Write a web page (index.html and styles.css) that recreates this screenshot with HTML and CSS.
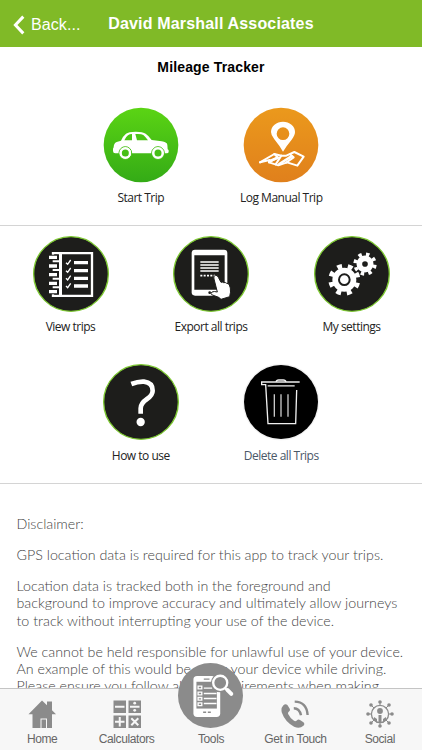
FILE: index.html
```
<!DOCTYPE html>
<html lang="en">
<head>
  <meta charset="UTF-8">
  <title>Mileage Tracker - David Marshall Associates</title>
  <meta name="viewport" content="width=device-width, initial-scale=1.0">
  <link rel="stylesheet" href="styles.css">
</head>
<body>
  <div class="app">
    <header class="header">
      <a class="back" href="#">
        <svg class="chevron" viewBox="0 0 12 20"><path d="M10.3 1.6 2.4 10l7.9 8.4"/></svg>
        <span>Back...</span>
      </a>
      <h1>David Marshall Associates</h1>
    </header>

    <main class="content">
      <h2>Mileage Tracker</h2>

      <!-- Start / log a trip -->
      <section class="row row-start">
        <a class="tile" href="#">
          <svg viewBox="36 33 234 234">
            <defs>
              <linearGradient id="green" x1="0" y1="0" x2="0" y2="1">
                <stop offset="0" stop-color="#5bd414"/>
                <stop offset="1" stop-color="#34ab16"/>
              </linearGradient>
            </defs>
            <circle cx="153" cy="150" r="112" fill="url(#green)"/>
            <path fill="#fff" d="M71 157q0-12 9-16l13-4q6-14 15-21 8-6 29-6 22 0 30 6 9 6 18 19l30 4q15 2 17 10l1 14q4 1 3 7 0 5-6 5H76q-7 0-7-7v-7z"/>
            <path fill="#4bc415" d="M103 136q6-12 11-15 5-4 12-4v19zM136 117q19-1 24 3t14 16h-33z"/>
            <g fill="#fff" stroke="#47c115" stroke-width="3">
              <circle cx="106" cy="174" r="19"/><circle cx="204" cy="174" r="19"/>
            </g>
            <g fill="#46bf15" stroke="#fff" stroke-width="7">
              <circle cx="106" cy="174" r="14"/><circle cx="204" cy="174" r="14"/>
            </g>
          </svg>
          <span>Start Trip</span>
        </a>
        <a class="tile" href="#">
          <svg viewBox="51 33 234 234">
            <defs>
              <linearGradient id="orange" x1="0" y1="0" x2="0" y2="1">
                <stop offset="0" stop-color="#eb991c"/>
                <stop offset="1" stop-color="#e0801c"/>
              </linearGradient>
            </defs>
            <circle cx="168" cy="150" r="112" fill="url(#orange)"/>
            <path fill="#fff" fill-rule="evenodd" d="M174 170q-9-16-26-37-10-12-10-22a36 31 0 0 1 72 0q0 10-10 23-16 19-26 36zM174 97a19 19 0 1 0 0 38 19 19 0 0 0 0-38z"/>
            <g fill="none" stroke="#fff" stroke-width="6" stroke-linejoin="round" stroke-linecap="round">
              <path d="M105 202 148 177 169 182 184 182 208 171 236 185 217 212 186 202 160 211 132 202"/>
              <path d="M105 202 134 195M148 177l10 10-26 15M169 182l-17 26M195 178l11 9-23 16"/>
              <path stroke-width="8" d="M158 188l-25 11M199 184l-36 23"/>
            </g>
          </svg>
          <span>Log Manual Trip</span>
        </a>
      </section>

      <section class="row row-trips">
        <a class="tile" href="#">
          <svg viewBox="36 46 234 234">
            <circle class="disc" cx="153" cy="163" r="112"/>
            <path fill="none" stroke="#fff" stroke-width="7" d="M99 100.500H216V228.500H99z"/>
            <path fill="#1d1d1b" d="M84 105h29v119H84z"/>
            <path fill="#fff" d="M117 98h9v132h-9z"/>
            <g fill="#fff">
              <path d="M87 108h24v10H87zM87 134h24v10H87zM87 160h24v10H87zM87 186h24v10H87zM87 211h24v10H87z"/>
              <path d="M98 122h19v6H98zM98 148h19v6H98zM98 174h19v6H98zM98 200h19v6H98z"/>
              <path d="M162 124h42v10h-42zM162 148h42v10h-42zM162 171h42v10h-42zM162 194h42v10h-42z"/>
            </g>
            <path fill="none" stroke="#fff" stroke-width="4" d="M138 129l5 5 9-13M138 153l5 5 9-13M138 176l5 5 9-13M138 199l5 5 9-13"/>
          </svg>
          <span>View trips</span>
        </a>
        <a class="tile" href="#">
          <svg viewBox="36 46 234 234">
            <circle class="disc" cx="153" cy="163" r="112"/>
            <rect x="95" y="90" width="107" height="138" rx="10" fill="#fff"/>
            <path fill="#1d1d1b" d="M103 107h91v103h-91z"/>
            <circle cx="149" cy="219" r="4" fill="#1d1d1b"/>
            <path stroke="#fff" stroke-width="5" d="M121 127h55M121 136h55M121 145h55M121 154h55"/>
            <path stroke="#fff" stroke-width="5" stroke-dasharray="6 4" d="M121 168h44"/>
            <path fill="#fff" stroke="#1d1d1b" stroke-width="3" stroke-linejoin="round" d="M162 178q-3-9 4-11 6-1 9 6l8 15q4-2 8 1 5-2 9 2 6 0 8 5l3 9q2 12-2 26l-26 8q-6-7-15-9l-13-5q-4-4 1-8 6-3 16 0z"/>
          </svg>
          <span>Export all trips</span>
        </a>
        <a class="tile" href="#">
          <svg viewBox="37 46 234 234">
            <circle class="disc" cx="154" cy="163" r="112"/>
            <!-- teeth are eight dashes round each wheel -->
            <g fill="none" stroke="#fff">
              <circle cx="131" cy="180" r="26" stroke-width="20"/>
              <circle cx="131" cy="180" r="41" stroke-width="14" pathLength="80" stroke-dasharray="4.500 5.500" stroke-dashoffset="-3"/>
              <circle cx="193" cy="133" r="17" stroke-width="17"/>
              <circle cx="193" cy="133" r="29.500" stroke-width="11" pathLength="80" stroke-dasharray="4.500 5.500" stroke-dashoffset="-1"/>
            </g>
            <circle cx="131" cy="180" r="16" fill="#fff" stroke="#1d1d1b" stroke-width="6"/>
          </svg>
          <span>My settings</span>
        </a>
      </section>

      <section class="row row-more">
        <a class="tile" href="#">
          <svg viewBox="36 26 234 234">
            <circle class="disc" cx="153" cy="143" r="112"/>
            <path fill="none" stroke="#fff" stroke-width="14" d="M124 89Q145 81 162 82 188 85 188 109 188 122 171 134 152 147 152 162V178"/>
            <circle cx="152" cy="203" r="12.500" fill="#fff"/>
          </svg>
          <span>How to use</span>
        </a>
        <a class="tile tile-delete" href="#">
          <svg viewBox="52 26 234 234">
            <circle cx="169" cy="143" r="115" fill="#f2f2f2"/>
            <circle cx="169" cy="143" r="111" fill="#000"/>
            <g fill="none" stroke="#f0f0f0" stroke-width="4">
              <path d="M225 83H111v8h12l7 117h83l3-101M129 94.500h81M154 83q1-6 8-6h14q7 0 8 6"/>
              <path stroke="#c8c8c8" d="M149 120v67M169 120v67M190 120v67"/>
            </g>
          </svg>
          <span>Delete all Trips</span>
        </a>
      </section>

      <section class="disclaimer">
        <p>Disclaimer:</p>
        <p>GPS location data is required for this app to track your trips.</p>
        <p>Location data is tracked both in the foreground and<br>background to improve accuracy and ultimately allow journeys<br>to track without interrupting your use of the device.</p>
        <p>We cannot be held responsible for unlawful use of your device.<br>An example of this would be using your device while driving.<br>Please ensure you follow all the requirements when making</p>
      </section>
    </main>

    <nav class="tabs">
      <a class="tab" href="#">
        <svg viewBox="0 0 28 28"><path d="M14 .5 19 5.200V1.500h5v8.700l4 4h-4V28h-5v-9.500h-6.500V28H4.500V14.200H.5zM13.500 28v-8.500H18V28z"/></svg>
        <span>Home</span>
      </a>
      <a class="tab" href="#">
        <svg viewBox="0 0 28 28">
          <path d="M.5.500h12.500v12.500H.5zM15.500.500H28v12.500H15.500zM.5 15.500h12.500V28H.5zM15.500 15.500H28V28H15.500z"/>
          <path class="sign" d="M2 6.700h9.500M17 6.700h9.500M2 21.700h9.500M6.750 17v9.500M18.300 18.300l7 7M25.300 18.300l-7 7"/>
          <circle class="dot" cx="21.700" cy="3.200" r="1.400"/><circle class="dot" cx="21.700" cy="10.300" r="1.400"/>
        </svg>
        <span>Calculators</span>
      </a>
      <a class="tab" href="#">
        <svg class="tools" viewBox="87 21 194 194">
          <circle cx="184" cy="118" r="97"/>
          <rect x="133" y="60" width="80" height="122" rx="11" fill="#fff"/>
          <path d="M142 77h61v80h-61z"/>
          <g fill="none" stroke="#fff">
            <path stroke-width="4" d="M147 90h11v8h-11zM147 108h11v8h-11zM147 124h11v8h-11zM147 140h11v8h-11zM164 96h25M164 112h38M164 127h38M164 142h38"/>
            <path stroke="#8b8b8b" stroke-width="4" d="M164 69h17M162 168h9M176 168h9"/>
            <circle cx="213" cy="80" r="28" fill="#8b8b8b" stroke="none"/>
            <circle cx="213" cy="80" r="21" stroke-width="7"/>
            <path stroke-width="7" d="M226 95l8 8"/>
            <path stroke-width="12" stroke-linecap="round" d="M235 102l11 11"/>
          </g>
        </svg>
        <span>Tools</span>
      </a>
      <a class="tab" href="#">
        <svg viewBox="0 0 28 28">
          <path d="M2.200 5.400q2.400-2.200 4.200-.3l2.200 3.300q1 1.900-.6 3.200-1.500 1-.7 2.600 1.900 4 5.700 6.600 1.500.9 2.800-.4 1.500-1.500 3.200-.4l3.400 2.200q1.800 1.600 0 3.600-3.700 3.500-9.300 1Q4 21.900.8 12.600-.3 8 2.200 5.400z"/>
          <path class="wave" d="M12.800 8.200Q18.500 8.200 20 15.300M13.700 1.600Q25.700 1.800 26.600 15"/>
        </svg>
        <span>Get in Touch</span>
      </a>
      <a class="tab" href="#">
        <svg viewBox="0 0 28 28">
          <circle class="ring" cx="14" cy="14" r="8.600"/>
          <path class="spoke" d="M14 2v4M14 22v4M2 14h4M22 14h4M5.200 5.200l3 3M19.800 19.800l3 3M22.800 5.200l-3 3M8.200 19.800l-3 3"/>
          <circle cx="14" cy="2" r="1.800"/><circle cx="14" cy="26" r="1.800"/><circle cx="2" cy="14" r="1.800"/><circle cx="26" cy="14" r="1.800"/>
          <circle cx="5" cy="5" r="1.800"/><circle cx="23" cy="5" r="1.800"/><circle cx="5" cy="23" r="1.800"/><circle cx="23" cy="23" r="1.800"/>
          <circle cx="14" cy="11" r="2.900"/>
          <path d="M12.500 15h3v8h-3zM8 17l3 2v4l-3-3zM20 17l-3 2v4l3-3z"/>
        </svg>
        <span>Social</span>
      </a>
    </nav>
  </div>
</body>
</html>
```
FILE: styles.css
```
* { box-sizing: border-box; }

body {
  font-family: "Liberation Sans", Arial, sans-serif;
  background: #fff;
  margin: 0;
}

a {
  color: inherit;
  text-decoration: none;
}

.app {
  display: flex;
  flex-direction: column;
  width: 422px;
  height: 750px;
  overflow: hidden;
}

/* top bar */
.header {
  display: grid;
  grid-template-columns: 108px 1fr 108px;
  align-items: center;
  flex: none;
  height: 47px;
  background: #80ba27;
  color: #fff;
}

.back {
  display: flex;
  align-items: center;
  gap: 6px;
  padding-left: 13px;
  padding-top: 2px;
  font-size: 16px;
  letter-spacing: 0.1px;
}

.chevron {
  width: 12px;
  height: 20px;
  fill: none;
  stroke: #fff;
  stroke-width: 3;
}

.header h1 {
  margin: 0;
  font-size: 16px;
  letter-spacing: 0.17px;
  text-align: center;
  white-space: nowrap;
}

.content {
  flex: 1;
  min-height: 0;
  overflow: hidden;
}

.content h2 {
  margin: 0;
  padding-top: 10px;
  font-size: 14px;
  line-height: 20px;
  letter-spacing: 0.15px;
  text-align: center;
  color: #000;
}

.row {
  display: flex;
  justify-content: center;
}

.row-start {
  height: 149px;
  padding-top: 29px;
  border-bottom: 1px solid #d4d4d4;
}

.row-trips {
  height: 128px;
  padding-top: 9px;
}

.row-more {
  height: 130px;
  padding-top: 9px;
  border-bottom: 1px solid #d4d4d4;
}

.tile {
  display: flex;
  flex-direction: column;
  align-items: center;
  gap: 4px;
  width: 140.5px;
  font-family: "Open Sans", sans-serif;
  font-size: 12px;
  line-height: 20px;
  letter-spacing: -0.5px;
  color: #222;
}

.tile svg {
  flex: none;
  width: 78px;
  height: 78px;
}

.row-more .tile { gap: 5px; }

.tile-delete { color: #4a5868; }

.disc {
  fill: #1d1d1b;
  stroke: #7dc832;
  stroke-width: 4;
}

.disclaimer {
  padding: 31px 0 0 16.5px;
  font-family: Lato, sans-serif;
  font-weight: 300;
  font-size: 14.27px;
  line-height: 17.3px;
  color: #444;
  white-space: nowrap;
}

.disclaimer p { margin: 0 0 13.7px; }

/* bottom tab bar */
.tabs {
  display: grid;
  grid-template-columns: repeat(5, 1fr);
  flex: none;
  height: 62px;
  background: #f7f7f7;
  border-top: 1px solid #c4c4c4;
}

/* icons taller than the bar stick out above it */
.tab {
  display: flex;
  flex-direction: column;
  align-items: center;
  justify-content: flex-end;
  gap: 3px;
  height: 61px;
  padding-bottom: 3px;
  font-size: 12px;
  line-height: 16px;
  letter-spacing: -0.4px;
  color: #666;
}

.tab svg {
  flex: none;
  width: 28px;
  height: 28px;
  fill: #8b8b8b;
}

.tab .tools {
  width: 65px;
  height: 65px;
}

.sign,
.wave,
.ring,
.spoke {
  fill: none;
  stroke: #8b8b8b;
  stroke-width: 2;
}

.tab .sign { stroke: #f7f7f7; }
.tab .dot { fill: #f7f7f7; }
.wave { stroke-width: 2.4; }
.ring { stroke-width: 1.3; }
.spoke { stroke-width: 1; }
```
